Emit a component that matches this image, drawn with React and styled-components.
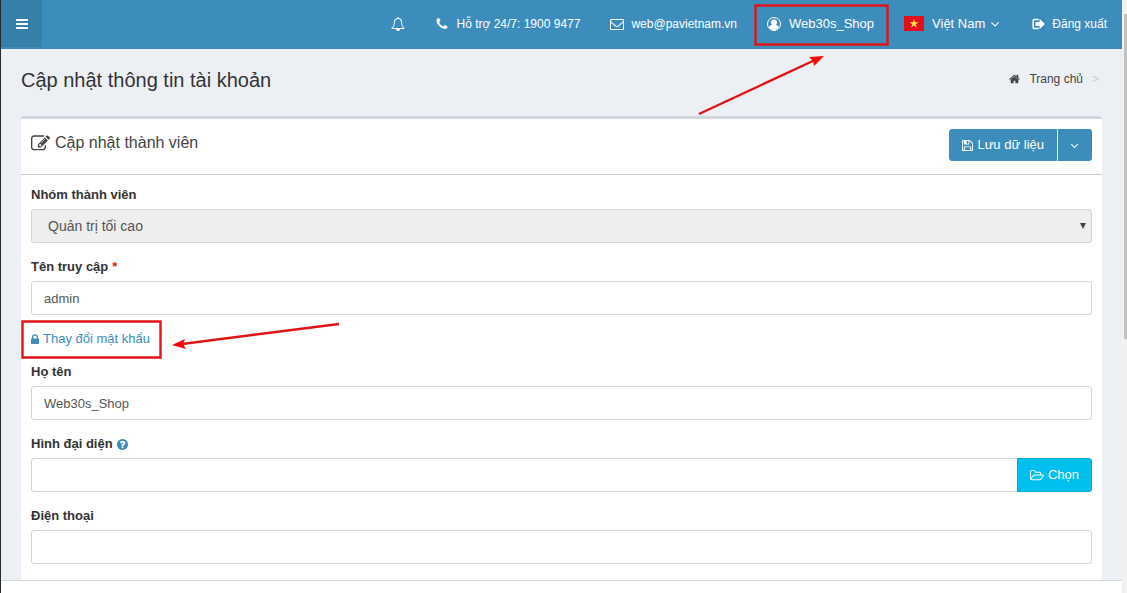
import React from 'react'
import styled, { createGlobalStyle } from 'styled-components'

const colors = {
  blue: '#3c8dbc',
  darkBlue: '#367fa9',
  cyan: '#00c0ef',
  page: '#ecf0f5',
  red: '#e01317',
  border: '#d2d6de',
}

const GlobalStyle = createGlobalStyle`
  * {
    box-sizing: border-box;
  }
  html, body, #root {
    height: 100%;
  }
  body {
    margin: 0;
    overflow: hidden;
    background: #fff;
    color: #333;
    font: 13px/20px "Liberation Sans", Arial, sans-serif;
  }
  a {
    color: inherit;
    text-decoration: none;
  }
  button, input, select {
    margin: 0;
    font: inherit;
  }
`

// Font Awesome 4 glyphs
const paths = {
  bars: 'M1664 1344v128q0 26-19 45t-45 19h-1408q-26 0-45-19t-19-45v-128q0-26 19-45t45-19h1408q26 0 45 19t19 45zm0-512v128q0 26-19 45t-45 19h-1408q-26 0-45-19t-19-45v-128q0-26 19-45t45-19h1408q26 0 45 19t19 45zm0-512v128q0 26-19 45t-45 19h-1408q-26 0-45-19t-19-45v-128q0-26 19-45t45-19h1408q26 0 45 19t19 45z',
  bell: 'M912 1696q0-16-16-16-59 0-101.5-42.5t-42.5-101.5q0-16-16-16t-16 16q0 73 51.5 124.5t124.5 51.5q16 0 16-16zm-666-288h1300q-266-300-266-832 0-51-24-105t-69-103-121.5-80.5-169.5-31.5-169.5 31.5-121.5 80.5-69 103-24 105q0 532-266 832zm1482 0q0 52-38 90t-90 38h-448q0 106-75 181t-181 75-181-75-75-181h-448q-52 0-90-38t-38-90q50-42 91-88t85-119.5 74.5-158.5 50-206 19.5-260q0-152 117-282.5t307-158.5q-8-19-8-39 0-40 28-68t68-28 68 28 28 68q0 20-8 39 190 28 307 158.5t117 282.5q0 139 19.5 260t50 206 74.5 158.5 85 119.5 91 88z',
  phone: 'M1600 1240q0 27-10 70.5t-21 68.5q-21 50-122 106-94 51-186 51-27 0-53-3.5t-57.5-12.5-47-14.5-55.5-20.5-49-18q-98-35-175-83-127-79-264-216t-216-264q-48-77-83-175-3-9-18-49t-20.5-55.5-14.5-47-12.5-57.5-3.5-53q0-92 51-186 56-101 106-122 25-11 68.5-21t70.5-10q14 0 21 3 18 6 53 76 11 19 30 54t35 63.5 31 53.5q3 4 17.5 25t21.5 35.5 7 28.5q0 20-28.5 50t-62 55-62 53-28.5 46q0 9 5 22.5t8.5 20.5 14 24 11.5 19q76 137 174 235t235 174q2 1 19 11.5t24 14 20.5 8.5 22.5 5q18 0 46-28.5t53-62 55-62 50-28.5q14 0 28.5 7t35.5 21.5 25 17.5q25 15 53.5 31t63.5 35 54 30q70 35 76 53 3 7 3 21z',
  envelope: 'M1664 1504v-768q-32 36-69 66-268 206-426 338-51 43-83 67t-86.5 48.5-102.5 24.5h-2q-48 0-102.5-24.5t-86.5-48.5-83-67q-158-132-426-338-37-30-69-66v768q0 13 9.5 22.5t22.5 9.5h1472q13 0 22.5-9.5t9.5-22.5zm0-1051v-24.5l-.5-13-3-12.5-5.5-9-9-7.5-14-2.5h-1472q-13 0-22.5 9.5t-9.5 22.5q0 168 147 284 193 152 401 317 6 5 35 29.5t46 37.5 44.5 31.5 50.5 27.5 43 9h2q20 0 43-9t50.5-27.5 44.5-31.5 46-37.5 35-29.5q208-165 401-317 54-43 100.5-115.5t46.5-131.5zm128-37v1088q0 66-47 113t-113 47h-1472q-66 0-113-47t-47-113v-1088q0-66 47-113t113-47h1472q66 0 113 47t47 113z',
  angleDown: 'M1395 736q0 13-10 23l-466 466q-10 10-23 10t-23-10l-466-466q-10-10-10-23t10-23l50-50q10-10 23-10t23 10l393 393 393-393q10-10 23-10t23 10l50 50q10 10 10 23z',
  signOut: 'M320 224h600v192h-540q-70 0-70 70v820q0 70 70 70h540v192h-600q-200 0-200-200v-944q0-200 200-200zm1376 672q0 26-19 45l-544 544q-19 19-45 19t-45-19-19-45v-288h-448q-26 0-45-19t-19-45v-384q0-26 19-45t45-19h448v-288q0-26 19-45t45-19 45 19l544 544q19 19 19 45z',
  home: 'M1472 992v480q0 26-19 45t-45 19h-384v-384h-256v384h-384q-26 0-45-19t-19-45v-480q0-1 .5-3t.5-3l575-474 575 474q1 2 1 6zm223-69l-62 74q-8 9-21 11h-3q-13 0-21-7l-692-577-692 577q-12 8-24 7-13-2-21-11l-62-74q-8-10-7-23.5t11-21.5l719-599q32-26 76-26t76 26l244 204v-195q0-14 9-23t23-9h192q14 0 23 9t9 23v408l219 182q10 8 11 21.5t-7 23.5z',
  edit: 'M888 1184l116-116-152-152-116 116v56h96v96h56zm440-720q-16-16-33 1l-350 350q-17 17-1 33t33-1l350-350q17-17 1-33zm80 594v190q0 119-84.5 203.5t-203.5 84.5h-832q-119 0-203.5-84.5t-84.5-203.5v-832q0-119 84.5-203.5t203.5-84.5h832q63 0 117 25 15 7 18 23 3 17-9 29l-49 49q-14 14-32 8-23-6-45-6h-832q-66 0-113 47t-47 113v832q0 66 47 113t113 47h832q66 0 113-47t47-113v-126q0-13 9-22l64-64q15-15 35-7t20 29zm-96-738l288 288-672 672h-288v-288zm444 132l-92 92-288-288 92-92q28-28 68-28t68 28l152 152q28 28 28 68t-28 68z',
  save: 'M512 1536h768v-384h-768v384zm896 0h128v-896q0-14-10-38.5t-20-34.5l-281-281q-10-10-34-20t-39-10v416q0 40-28 68t-68 28h-576q-40 0-68-28t-28-68v-416h-128v1280h128v-416q0-40 28-68t68-28h832q40 0 68 28t28 68v416zm-384-928v-320q0-13-9.5-22.5t-22.5-9.5h-192q-13 0-22.5 9.5t-9.5 22.5v320q0 13 9.5 22.5t22.5 9.5h192q13 0 22.5-9.5t9.5-22.5zm640 32v928q0 40-28 68t-68 28h-1344q-40 0-68-28t-28-68v-1344q0-40 28-68t68-28h928q40 0 88 20t76 48l280 280q28 28 48 76t20 88z',
  lock: 'M640 768h512v-192q0-106-75-181t-181-75-181 75-75 181v192zm832 96v576q0 40-28 68t-68 28h-960q-40 0-68-28t-28-68v-576q0-40 28-68t68-28h32v-192q0-184 132-316t316-132 316 132 132 316v192h32q40 0 68 28t28 68z',
  question: 'M1024 1376v-192q0-14-9-23t-23-9h-192q-14 0-23 9t-9 23v192q0 14 9 23t23 9h192q14 0 23-9t9-23zm256-672q0-88-55.5-163t-138.5-116-170-41q-243 0-371 213-15 24 8 42l132 100q7 6 19 6 16 0 25-12 53-68 86-92 34-24 86-24 48 0 85.5 26t37.5 59q0 38-20 61t-68 45q-63 28-115.5 86.5t-52.5 125.5v36q0 14 9 23t23 9h192q14 0 23-9t9-23q0-19 21.5-49.5t54.5-49.5q32-18 49-28.5t46-35 44.5-48 28-60.5 12.5-81zm384 192q0 209-103 385.5t-279.5 279.5-385.5 103-385.5-103-279.5-279.5-103-385.5 103-385.5 279.5-279.5 385.5-103 385.5 103 279.5 279.5 103 385.5z',
  folder: 'M1845 931q0-35-53-35h-1088q-40 0-85.5 21.5t-71.5 52.5l-294 363q-18 24-18 40 0 35 53 35h1088q40 0 86-22t71-53l294-363q18-22 18-39zm-1141-163h768v-160q0-40-28-68t-68-28h-576q-40 0-68-28t-28-68v-64q0-40-28-68t-68-28h-320q-40 0-68 28t-28 68v853l256-315q44-53 116-87.5t140-34.5zm1269 163q0 62-46 120l-295 363q-43 53-116 87.5t-140 34.5h-1088q-92 0-158-66t-66-158v-960q0-92 66-158t158-66h320q92 0 158 66t66 158v32h544q92 0 158 66t66 158v160h192q54 0 99 24.5t67 70.5q15 32 15 68z',
}

// Horizontal extent of the glyphs that are narrower or wider than the em box
const boxes = {
  bars: '128 0 1536 1792',
  save: '128 0 1536 1792',
  question: '128 0 1536 1792',
  lock: '320 0 1152 1792',
  home: '64 0 1664 1792',
  signOut: '64 0 1664 1792',
  folder: '64 0 1920 1792',
}

const Svg = styled.svg`
  display: block;
  flex: none;
  fill: currentColor;
`

const Icon = ({ name, size = 14, width = size }) => (
  <Svg width={width} height={size} viewBox={boxes[name] || '0 0 1792 1792'} aria-hidden="true">
    <path d={paths[name]} />
  </Svg>
)

const UserIcon = () => (
  <Svg width="14" height="14" viewBox="0 0 28 28" aria-hidden="true">
    <circle cx="14" cy="14" r="13" fill="none" stroke="currentColor" strokeWidth="2" />
    <path d="M14 5c3.600 0 6 2.500 6 6 0 2-.8 3.700-2 4.800 3.400.6 5.800 2.600 6.200 5.200-2.400 3-6 4.800-10.200 4.800s-7.800-1.800-10.200-4.800c.4-2.600 2.800-4.600 6.200-5.200-1.200-1.100-2-2.800-2-4.800 0-3.500 2.400-6 6-6z" />
  </Svg>
)

const Flag = () => (
  <Svg width="20" height="15" viewBox="0 0 20 15" aria-hidden="true">
    <path fill="#e2101c" d="M0 0h20v15H0z" />
    <path fill="#ffe94d" d="M10 3l1 3.300h3.500l-2.800 2 1.100 3.300-2.800-2-2.800 2 1.100-3.300-2.800-2H9z" />
  </Svg>
)

// Layout
const Page = styled.div`
  position: relative;
  display: flex;
  height: 100vh;
  border-left: 1px solid #222d32;
`

const Main = styled.div`
  flex: 1;
  min-width: 0;
  display: flex;
  flex-direction: column;
`

const Header = styled.header`
  flex: none;
  display: flex;
  justify-content: space-between;
  height: 49px;
  background: ${colors.blue};
  color: #fff;
`

const Toggle = styled.button`
  display: flex;
  align-items: center;
  justify-content: center;
  width: 41px;
  height: 47px;
  padding: 0;
  border: 0;
  background: ${colors.darkBlue};
  color: #fff;
`

const Nav = styled.nav`
  display: flex;
  align-items: center;
  gap: 30px;
  height: 47px;
  padding-right: 15px;
`

const NavLink = styled.a`
  display: flex;
  align-items: center;
  gap: ${({ large }) => (large ? '8px' : '7px')};
  font-size: ${({ large }) => (large ? '13px' : '12px')};
  white-space: nowrap;
`

const Language = styled.span`
  display: flex;
  align-items: center;
  gap: 3px;
`

const TitleBar = styled.section`
  display: flex;
  justify-content: space-between;
  padding: 16px 23px 21px 20px;
`

const Title = styled.h1`
  margin: 0;
  font-size: 20px;
  font-weight: 400;
  line-height: 30px;
`

const Breadcrumb = styled.div`
  display: flex;
  align-items: center;
  gap: 9px;
  height: 28px;
  font-size: 12px;
  color: #444;

  span {
    color: #ccc;
  }
`

const Content = styled.main`
  flex: 1;
  min-height: 0;
  overflow: hidden;
  background: ${colors.page};
`

const Box = styled.section`
  margin: 0 20px;
  border-top: 3px solid ${colors.border};
  border-radius: 3px;
  background: #fff;
`

const BoxHeader = styled.div`
  display: flex;
  justify-content: space-between;
  align-items: flex-start;
  padding: 10px 10px 13px;
  border-bottom: 1px solid #c8cacd;
`

const BoxTitle = styled.h2`
  display: flex;
  align-items: center;
  gap: 5px;
  margin: 0;
  font-size: 16px;
  font-weight: 400;
  line-height: 28px;
  color: #444;
`

const ButtonGroup = styled.div`
  display: flex;
`

const Button = styled.button`
  display: flex;
  align-items: center;
  justify-content: center;
  gap: 4px;
  height: ${({ info }) => (info ? '34px' : '32px')};
  padding: 0 12px;
  border: 1px solid ${({ info }) => (info ? '#00acd6' : colors.blue)};
  border-radius: ${({ start }) => (start ? '3px 0 0 3px' : '0 3px 3px 0')};
  background: ${({ info }) => (info ? colors.cyan : colors.blue)};
  color: #fff;
  white-space: nowrap;
`

const SplitButton = styled(Button)`
  padding: 0 10px;
  border-left-color: #fff;
`

const Form = styled.form`
  padding: 10px;
`

const Field = styled.div`
  margin-bottom: 14px;
`

const Label = styled.label`
  display: flex;
  align-items: center;
  gap: 4px;
  margin-bottom: 4px;
  font-weight: 700;

  b {
    color: #dd1b16;
  }
  svg {
    color: ${colors.blue};
  }
`

const Input = styled.input`
  display: block;
  flex: 1;
  width: 100%;
  min-width: 0;
  height: 34px;
  padding: 0 12px;
  border: 1px solid ${colors.border};
  border-radius: ${({ joined }) => (joined ? '3px 0 0 3px' : '3px')};
  border-right-width: ${({ joined }) => (joined ? '0' : '1px')};
  background: #fff;
  color: #555;
`

const InputGroup = styled.div`
  display: flex;
`

const SelectWrap = styled.div`
  position: relative;

  &::after {
    content: '';
    position: absolute;
    top: 14px;
    right: 6px;
    border: solid transparent;
    border-width: 6px 3px 0;
    border-top-color: #444;
  }
`

const Select = styled.select`
  display: block;
  width: 100%;
  height: 34px;
  padding: 0 16px;
  border: 1px solid ${colors.border};
  border-radius: 3px;
  background: #eee;
  color: #555;
  font-size: 14px;
  opacity: 1;
  appearance: none;
`

const PasswordLink = styled.a`
  display: flex;
  align-items: center;
  gap: 4px;
  width: fit-content;
  margin-bottom: 13px;
  color: ${colors.blue};
`

const Footer = styled.footer`
  flex: none;
  height: 13px;
  border-top: 1px solid ${colors.border};
  background: #fff;
`

const Scrollbar = styled.div`
  flex: none;
  width: 5px;
  padding: 14px 0 0 2px;
  background: #f1f1f1;
`

const Thumb = styled.div`
  height: 325px;
  background: #c1c1c1;
`

// Red marks drawn over the page
const Marks = styled.svg`
  position: absolute;
  top: 0;
  left: -1px;
  fill: none;
  stroke: ${colors.red};
  stroke-width: 2.4;
  pointer-events: none;
`

const App = () => (
  <Page>
    <GlobalStyle />
    <Main>
      <Header>
        <Toggle type="button" aria-label="Menu"><Icon name="bars" width={12} /></Toggle>
        <Nav>
          <NavLink href="#" aria-label="Thông báo"><Icon name="bell" /></NavLink>
          <NavLink href="#"><Icon name="phone" />Hỗ trợ 24/7: 1900 9477</NavLink>
          <NavLink href="#"><Icon name="envelope" />web@pavietnam.vn</NavLink>
          <NavLink href="#" large><UserIcon />Web30s_Shop</NavLink>
          <NavLink href="#" large>
            <Flag />
            <Language>Việt Nam<Icon name="angleDown" /></Language>
          </NavLink>
          <NavLink href="#"><Icon name="signOut" width={13} />Đăng xuất</NavLink>
        </Nav>
      </Header>
      <Content>
        <TitleBar>
          <Title>Cập nhật thông tin tài khoản</Title>
          <Breadcrumb>
            <Icon name="home" size={12} width={11} />
            <a href="#">Trang chủ</a>
            <span>&gt;</span>
          </Breadcrumb>
        </TitleBar>
        <Box>
          <BoxHeader>
            <BoxTitle><Icon name="edit" size={19} />Cập nhật thành viên</BoxTitle>
            <ButtonGroup>
              <Button type="button" start><Icon name="save" size={13} width={11} />Lưu dữ liệu</Button>
              <SplitButton type="button" aria-label="Thêm"><Icon name="angleDown" size={13} /></SplitButton>
            </ButtonGroup>
          </BoxHeader>
          <Form>
            <Field>
              <Label htmlFor="group">Nhóm thành viên</Label>
              <SelectWrap>
                <Select id="group" disabled>
                  <option>Quản trị tối cao</option>
                </Select>
              </SelectWrap>
            </Field>
            <Field>
              <Label htmlFor="username">Tên truy cập <b>*</b></Label>
              <Input id="username" defaultValue="admin" />
            </Field>
            <PasswordLink href="#"><Icon name="lock" size={13} width={8} />Thay đổi mật khẩu</PasswordLink>
            <Field>
              <Label htmlFor="fullname">Họ tên</Label>
              <Input id="fullname" defaultValue="Web30s_Shop" />
            </Field>
            <Field>
              <Label htmlFor="avatar">Hình đại diện <Icon name="question" size={13} width={11} /></Label>
              <InputGroup>
                <Input id="avatar" joined />
                <Button type="button" info><Icon name="folder" size={13} width={14} />Chọn</Button>
              </InputGroup>
            </Field>
            <Field>
              <Label htmlFor="phone">Điện thoại</Label>
              <Input id="phone" />
            </Field>
          </Form>
        </Box>
      </Content>
      <Footer />
    </Main>
    <Scrollbar><Thumb /></Scrollbar>
    <Marks width="1127" height="593" viewBox="0 0 1127 593" aria-hidden="true">
      <path d="M755.500 5.500h132v39h-132zM22.500 321.500h138v36h-138zM699 114L815 60M339 324L182 344" />
      <path fill="#ee0a0a" stroke="none" d="M824 56l-10 10-1-5-4-4zM172 345l13-6-2 5 3 5z" />
    </Marks>
  </Page>
)

export default App
